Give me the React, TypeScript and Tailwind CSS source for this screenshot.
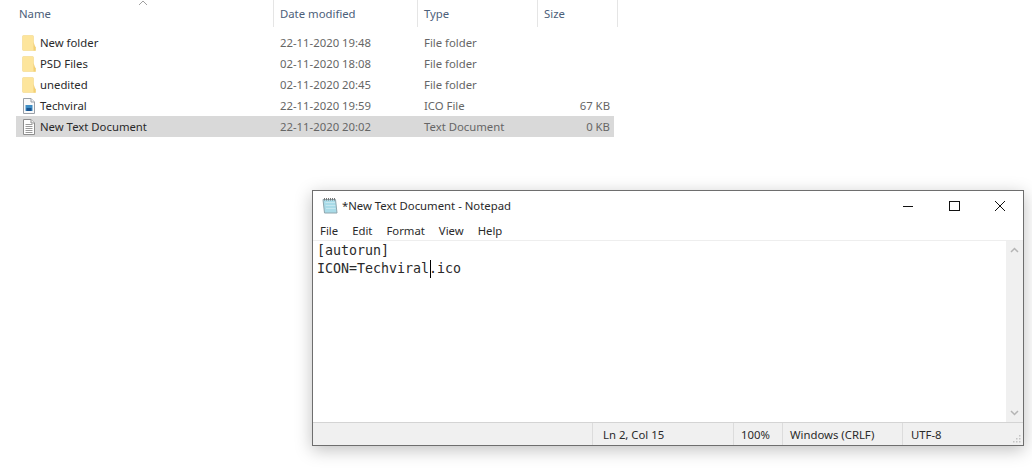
const files = [
  { name: 'New folder', date: '22-11-2020 19:48', type: 'File folder', size: '', icon: 'folder' },
  { name: 'PSD Files', date: '02-11-2020 18:08', type: 'File folder', size: '', icon: 'folder' },
  { name: 'unedited', date: '02-11-2020 20:45', type: 'File folder', size: '', icon: 'folder' },
  { name: 'Techviral', date: '22-11-2020 19:59', type: 'ICO File', size: '67 KB', icon: 'ico' },
  { name: 'New Text Document', date: '22-11-2020 20:02', type: 'Text Document', size: '0 KB', icon: 'txt' },
];

function FileIcon({ kind }: { kind: string }) {
  if (kind === 'folder') {
    return (
      <svg width="14" height="16" viewBox="0 0 14 16">
        <path d="M0.5 1.5 Q0.5 0.5 1.5 0.5 H10.5 Q11.5 0.5 11.5 1.5 V12 H13.5 V15.5 H1.5 Q0.5 15.5 0.5 14.5 Z" fill="#fde59c" stroke="#f4d98a" strokeWidth="0.6" />
        <path d="M11.5 7 L13.5 12.5 V15.5 H11.5 Z" fill="#f3d074" />
      </svg>
    );
  }
  if (kind === 'ico') {
    return (
      <svg width="14" height="16" viewBox="0 0 14 16">
        <path d="M1.5 0.5 H9 L12.5 4 V15.5 H1.5 Z" fill="#f8f9fa" stroke="#9aa0a8" />
        <path d="M9 0.5 V4 H12.5" fill="#eef0f2" stroke="#9aa0a8" />
        <rect x="3.5" y="7" width="7" height="6" fill="#3f8dc4" />
        <rect x="4.5" y="10" width="5" height="3" fill="#17538f" />
      </svg>
    );
  }
  return (
    <svg width="14" height="16" viewBox="0 0 14 16">
      <path d="M1.5 0.5 H9 L12.5 4 V15.5 H1.5 Z" fill="#fff" stroke="#8e8e8e" />
      <path d="M9 0.5 V4 H12.5" fill="#f0f0f0" stroke="#8e8e8e" />
      <path d="M3.5 5.5 H10.5 M3.5 7.5 H10.5 M3.5 9.5 H10.5 M3.5 11.5 H10.5 M3.5 13.5 H10.5" stroke="#9a9a9a" />
    </svg>
  );
}

function NotepadIcon() {
  return (
    <svg width="16" height="17" viewBox="0 0 16 17">
      <path d="M1 2.5 H13.5 L15 16 H2.5 Z" fill="#a9dbe8" stroke="#8fa6ae" />
      <path d="M3.5 5.5 H13 M3.7 8.5 H13.3 M4 11.5 H13.6" stroke="#c6e8f0" />
      <path d="M2.5 1 V3.5 M4.5 1 V3.5 M6.5 1 V3.5 M8.5 1 V3.5 M10.5 1 V3.5 M12.5 1 V3.5" stroke="#777" />
    </svg>
  );
}

export default function App() {
  return (
    <div className="w-[1032px] h-[474px] overflow-hidden bg-white font-['Noto_Sans',sans-serif] text-[11.33px]">
      {/* Explorer header */}
      <div className="relative flex h-[27px] pl-[19px] items-center text-[#4c607a]">
        <svg className="absolute left-[138px] top-0" width="10" height="6" viewBox="0 0 10 6">
          <path d="M1 5 L5 1 L9 5" fill="none" stroke="#a0a0a0" />
        </svg>
        <div className="w-[255px] h-full pt-[2px] flex items-center border-r border-[#e5e5e5]">Name</div>
        <div className="w-[144px] h-full pt-[2px] flex items-center pl-[6px] border-r border-[#e5e5e5]">Date modified</div>
        <div className="w-[120px] h-full pt-[2px] flex items-center pl-[6px] border-r border-[#e5e5e5]">Type</div>
        <div className="w-[80px] h-full pt-[2px] flex items-center pl-[6px] border-r border-[#e5e5e5]">Size</div>
      </div>

      {/* File rows */}
      <div className="mt-[5px] ml-[16px] w-[598px]">
        {files.map((file) => (
          <div key={file.name} className={`flex items-center h-[21px] text-[#666666] ${file.icon === 'txt' ? 'bg-[#d9d9d9]' : ''}`}>
            <div className="w-[24px] pl-[6px] flex items-center justify-start">
              <FileIcon kind={file.icon} />
            </div>
            <div className="w-[240px] pt-px text-[#2a2a2a]">{file.name}</div>
            <div className="w-[144px] pt-px">{file.date}</div>
            <div className="w-[100px] pt-px">{file.type}</div>
            <div className="w-[86px] pt-px text-right">{file.size}</div>
          </div>
        ))}
      </div>

      {/* Notepad window */}
      <div className="mt-[53px] ml-[312px] w-[712px] h-[256px] flex flex-col border border-[#6e6e6e] bg-white shadow-[0_4px_16px_rgba(0,0,0,0.25)]">
        <div className="h-[29px] shrink-0 flex items-center pl-[9px] text-[#2a2a2a]">
          <NotepadIcon />
          <span className="ml-[4px] pt-[2px]">*New Text Document - Notepad</span>
          <div className="ml-auto flex items-center">
            <svg width="46" height="12" viewBox="0 0 46 12"><path d="M18 6.5 H28" stroke="#111" /></svg>
            <svg width="46" height="12" viewBox="0 0 46 12"><rect x="18.5" y="1.5" width="10" height="9" fill="none" stroke="#111" /></svg>
            <svg width="46" height="12" viewBox="0 0 46 12"><path d="M18 1 L28 11 M28 1 L18 11" stroke="#111" /></svg>
          </div>
        </div>
        <div className="h-[21px] shrink-0 pt-[2px] flex items-center pl-[7px] gap-[14px] text-[#2a2a2a] border-b border-[#eeeeee]">
          <span>File</span>
          <span>Edit</span>
          <span>Format</span>
          <span>View</span>
          <span>Help</span>
        </div>
        <div className="flex-1 flex min-h-0">
          <div className="flex-1 pl-[4px] pt-px font-['DejaVu_Sans_Mono',monospace] text-[13.3px] leading-[18px] text-[#2a2a2a]">
            <div>[autorun]</div>
            <div className="relative">
              ICON=Techviral.ico
              <span className="absolute left-[113px] top-0 h-[18px] w-px bg-black" />
            </div>
          </div>
          <div className="w-[17px] shrink-0 bg-[#f0f0f0] flex flex-col justify-between items-center py-[6px]">
            <svg width="9" height="6" viewBox="0 0 9 6"><path d="M1 5 L4.5 1.5 L8 5" fill="none" stroke="#b5b5b5" strokeWidth="1.5" /></svg>
            <svg width="9" height="6" viewBox="0 0 9 6"><path d="M1 1 L4.5 4.5 L8 1" fill="none" stroke="#b5b5b5" strokeWidth="1.5" /></svg>
          </div>
        </div>
        <div className="relative h-[23px] shrink-0 flex items-center bg-[#f0f0f0] border-t border-[#d4d4d4] text-[#2a2a2a]">
          <div className="w-[279px]" />
          <div className="w-[141px] h-full pt-[2px] flex items-center pl-[10px] border-l border-[#dcdcdc]">Ln 2, Col 15</div>
          <div className="w-[49px] h-full pt-[2px] flex items-center pl-[7px] border-l border-[#dcdcdc]">100%</div>
          <div className="w-[120px] h-full pt-[2px] flex items-center pl-[7px] border-l border-[#dcdcdc]">Windows (CRLF)</div>
          <div className="flex-1 h-full pt-[2px] flex items-center pl-[8px] border-l border-[#dcdcdc]">UTF-8</div>
          <svg className="absolute right-[2px] bottom-[2px]" width="9" height="9" viewBox="0 0 9 9">
            <path d="M7 1h1.5v1.5H7zM4 4h1.5v1.5H4zM7 4h1.5v1.5H7zM1 7h1.5v1.5H1zM4 7h1.5v1.5H4zM7 7h1.5v1.5H7z" fill="#c4c4c4" />
          </svg>
        </div>
      </div>
    </div>
  );
}
